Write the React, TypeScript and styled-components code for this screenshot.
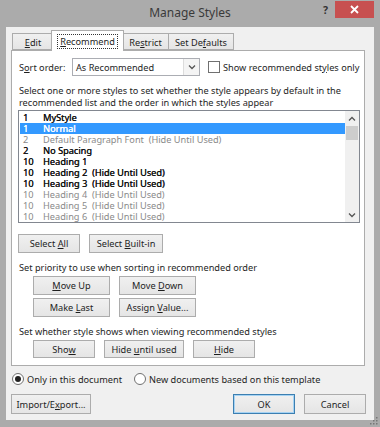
import React from 'react';
import styled, { createGlobalStyle } from 'styled-components';

const GlobalStyle = createGlobalStyle`
  html, body {
    margin: 0;
    padding: 0;
  }
  body {
    width: 380px;
    height: 427px;
    overflow: hidden;
    font-family: "Noto Sans", "Liberation Sans", sans-serif;
    font-size: 9.2px;
    color: #1e1e1e;
  }
`;

const Window = styled.div`
  position: relative;
  width: 380px;
  height: 427px;
  box-sizing: border-box;
  background: #ababab;
  display: flex;
  flex-direction: column;
  padding: 0 6px 7px 6px;
`;

const TitleBar = styled.div`
  height: 27px;
  display: grid;
  grid-template-columns: 1fr auto 1fr;
  align-items: start;
`;

const Title = styled.div`
  grid-column: 2;
  font-size: 12px;
  line-height: 25px;
  color: #3a3a3a;
`;

const Controls = styled.div`
  grid-column: 3;
  justify-self: end;
  display: flex;
  align-items: flex-start;
`;

const Help = styled.div`
  width: 12px;
  font-size: 10.5px;
  font-weight: 700;
  line-height: 20px;
  color: #333;
`;

const Close = styled.div`
  width: 39px;
  height: 17px;
  margin-top: 1px;
  background: #c75050;
  display: flex;
  align-items: center;
  justify-content: center;
`;

const Client = styled.div`
  flex: 1;
  background: #f0f0f0;
  display: flex;
  flex-direction: column;
  padding: 3px 9px 0 5px;
`;

const TabStrip = styled.div`
  display: flex;
  align-items: flex-end;
  height: 20px;
  padding-left: 1px;
  position: relative;
  z-index: 1;
`;

const Tab = styled.div<{ $w: number; $active?: boolean }>`
  width: ${(p) => p.$w}px;
  height: ${(p) => (p.$active ? 21 : 17)}px;
  box-sizing: border-box;
  margin-bottom: ${(p) => (p.$active ? -1 : 0)}px;
  margin-left: ${(p) => (p.$active ? -2 : 0)}px;
  margin-right: ${(p) => (p.$active ? -2 : -1)}px;
  border: 1px solid #acacac;
  border-bottom: ${(p) => (p.$active ? 'none' : '1px solid #acacac')};
  background: ${(p) => (p.$active ? '#fff' : 'linear-gradient(#f0f0f0, #e5e5e5)')};
  display: flex;
  align-items: center;
  justify-content: center;
  padding-top: ${(p) => (p.$active ? 0 : 1)}px;
  white-space: nowrap;
  position: relative;
  z-index: ${(p) => (p.$active ? 2 : 1)};
`;

const Focus = styled.span`
  outline: 1px dotted #333;
  padding: 0 2px;
  line-height: 13px;
`;

const Key = styled.span`
  text-decoration: underline;
  text-underline-offset: 1px;
`;

const Panel = styled.div`
  height: 316px;
  box-sizing: border-box;
  background: #fff;
  border: 1px solid #acacac;
  padding: 7px 4px 0 6px;
  display: flex;
  flex-direction: column;
`;

const SortRow = styled.div`
  display: flex;
  align-items: center;
  height: 18px;
  white-space: nowrap;
`;

const FieldLabel = styled.div`
  width: 54px;
  padding-left: 1px;
  box-sizing: border-box;
`;

const Combo = styled.div`
  width: 128px;
  height: 18px;
  box-sizing: border-box;
  border: 1px solid #abadb3;
  background: #fff;
  display: flex;
  align-items: center;
`;

const ComboText = styled.div`
  flex: 1;
  padding-left: 3px;
`;

const DropButton = styled.div`
  width: 15px;
  height: 16px;
  border-left: 1px solid #dcdcdc;
  background: #f4f4f4;
  display: flex;
  align-items: center;
  justify-content: center;
`;

const CheckBox = styled.div`
  width: 12px;
  height: 12px;
  box-sizing: border-box;
  margin-left: 8px;
  margin-right: 3px;
  border: 1px solid #707070;
  background: #fff;
`;

const Text = styled.div<{ $top: number }>`
  margin-top: ${(p) => p.$top}px;
  line-height: 12px;
  white-space: nowrap;
  padding-left: 1px;
`;

const ListBox = styled.div`
  margin-top: 1px;
  width: 342px;
  height: 113px;
  box-sizing: border-box;
  border: 1px solid #828790;
  display: flex;
  overflow: hidden;
`;

const Rows = styled.div`
  flex: 1;
  padding: 1px 0 0 1px;
  overflow: hidden;
`;

const Row = styled.div<{ $selected?: boolean; $dim?: boolean }>`
  height: 11px;
  line-height: 11px;
  display: flex;
  white-space: pre;
  padding-left: 3px;
  background: ${(p) => (p.$selected ? '#3399ff' : 'transparent')};
  color: ${(p) => (p.$selected ? '#fff' : p.$dim ? '#8a8a8a' : '#111')};
  text-shadow: ${(p) => (p.$dim ? 'none' : '0.3px 0 0 currentColor')};
`;

const Num = styled.span`
  width: 20px;
  flex-shrink: 0;
`;

const Scrollbar = styled.div`
  width: 14px;
  background: #f0f0f0;
  display: flex;
  flex-direction: column;
  align-items: center;
`;

const Arrow = styled.div`
  height: 14px;
  display: flex;
  align-items: center;
  justify-content: center;
`;

const Thumb = styled.div`
  width: 12px;
  height: 14px;
  margin-top: 1px;
  background: #cdcdcd;
`;

const Track = styled.div`
  flex: 1;
`;

const ButtonRow = styled.div<{ $top: number; $indent?: number }>`
  display: flex;
  gap: 9px;
  margin-top: ${(p) => p.$top}px;
  margin-left: ${(p) => p.$indent ?? 0}px;
`;

const Button = styled.div<{ $w: number; $h?: number; $default?: boolean }>`
  width: ${(p) => p.$w}px;
  height: ${(p) => p.$h ?? 19}px;
  box-sizing: border-box;
  border: 1px solid ${(p) => (p.$default ? '#3c7fb1' : '#acacac')};
  box-shadow: ${(p) => (p.$default ? 'inset 0 0 0 1px #a6d3f3' : 'none')};
  background: linear-gradient(#f0f0f0, #e5e5e5);
  display: flex;
  align-items: center;
  justify-content: center;
  white-space: nowrap;
  color: #1e1e1e;
`;

const RadioRow = styled.div`
  display: flex;
  align-items: center;
  height: 12px;
  margin-top: 7px;
  padding-left: 1px;
  white-space: nowrap;
`;

const RadioItem = styled.label`
  display: flex;
  align-items: center;
  gap: 3px;
  margin-right: 12px;
`;

const Radio = styled.div<{ $checked?: boolean }>`
  width: 12px;
  height: 12px;
  box-sizing: border-box;
  border-radius: 50%;
  border: 1px solid #707070;
  background: #fff;
  display: flex;
  align-items: center;
  justify-content: center;

  &::after {
    content: '';
    display: ${(p) => (p.$checked ? 'block' : 'none')};
    width: 6px;
    height: 6px;
    border-radius: 50%;
    background: #222;
  }
`;

const Footer = styled.div`
  display: flex;
  margin-top: 9px;
`;

const Spacer = styled.div`
  flex: 1;
`;

const FooterRight = styled.div`
  display: flex;
  gap: 9px;
  margin-right: -1px;
`;

const Grip = styled.svg`
  position: absolute;
  right: 2px;
  bottom: 2px;
`;

const Chevron = ({ up }: { up?: boolean }) => (
  <svg width="8" height="5" viewBox="0 0 8 5">
    <path
      d={up ? 'M1 4.5 L4 1.5 L7 4.5' : 'M1 0.5 L4 3.5 L7 0.5'}
      fill="none"
      stroke="#555"
      strokeWidth="1.3"
    />
  </svg>
);

type Style = { n: string; name: string; dim?: boolean; selected?: boolean };

const styles: Style[] = [
  { n: '1', name: 'MyStyle' },
  { n: '1', name: 'Normal', selected: true },
  { n: '2', name: 'Default Paragraph Font  (Hide Until Used)', dim: true },
  { n: '2', name: 'No Spacing' },
  { n: '10', name: 'Heading 1' },
  { n: '10', name: 'Heading 2  (Hide Until Used)' },
  { n: '10', name: 'Heading 3  (Hide Until Used)' },
  { n: '10', name: 'Heading 4  (Hide Until Used)', dim: true },
  { n: '10', name: 'Heading 5  (Hide Until Used)', dim: true },
  { n: '10', name: 'Heading 6  (Hide Until Used)', dim: true },
];

export default function App() {
  return (
    <>
      <GlobalStyle />
      <Window>
        <TitleBar>
          <Title>Manage Styles</Title>
          <Controls>
            <Help>?</Help>
            <Close>
              <svg width="9" height="9" viewBox="0 0 9 9">
                <path d="M1 1 L8 8 M8 1 L1 8" stroke="#fff" strokeWidth="1.8" />
              </svg>
            </Close>
          </Controls>
        </TitleBar>

        <Client>
          <TabStrip>
            <Tab $w={42}>
              <span><Key>E</Key>dit</span>
            </Tab>
            <Tab $w={73} $active>
              <Focus><Key>R</Key>ecommend</Focus>
            </Tab>
            <Tab $w={47}>
              <span>Re<Key>s</Key>trict</span>
            </Tab>
            <Tab $w={66}>
              <span>Set De<Key>f</Key>aults</span>
            </Tab>
          </TabStrip>

          <Panel>
            <SortRow>
              <FieldLabel>S<Key>o</Key>rt order:</FieldLabel>
              <Combo>
                <ComboText>As Recommended</ComboText>
                <DropButton>
                  <Chevron />
                </DropButton>
              </Combo>
              <CheckBox />
              <span>Show recommended st<Key>y</Key>les only</span>
            </SortRow>

            <Text $top={9}>
              Select one or more styles to set whether the style appears by default in the
              <br />
              recommended list and the order in which the styles appear
            </Text>

            <ListBox>
              <Rows>
                {styles.map((s, i) => (
                  <Row key={i} $selected={s.selected} $dim={s.dim}>
                    <Num>{s.n}</Num>
                    <span>{s.name}</span>
                  </Row>
                ))}
              </Rows>
              <Scrollbar>
                <Arrow>
                  <Chevron up />
                </Arrow>
                <Thumb />
                <Track />
                <Arrow>
                  <Chevron />
                </Arrow>
              </Scrollbar>
            </ListBox>

            <ButtonRow $top={11}>
              <Button $w={62}><span>Select <Key>A</Key>ll</span></Button>
              <Button $w={74}><span>Select <Key>B</Key>uilt-in</span></Button>
            </ButtonRow>

            <Text $top={9}>Set priority to use when sorting in recommended order</Text>
            <ButtonRow $top={2} $indent={15}>
              <Button $w={77}><span><Key>M</Key>ove Up</span></Button>
              <Button $w={77}><span>Move <Key>D</Key>own</span></Button>
            </ButtonRow>
            <ButtonRow $top={3} $indent={15}>
              <Button $w={77}><span>Make <Key>L</Key>ast</span></Button>
              <Button $w={77}><span>Assign <Key>V</Key>alue...</span></Button>
            </ButtonRow>

            <Text $top={9}>Set whether style shows when viewing recommended styles</Text>
            <ButtonRow $top={2} $indent={15}>
              <Button $w={62} $h={18}><span>Sho<Key>w</Key></span></Button>
              <Button $w={80} $h={18}><span>Hide <Key>u</Key>ntil used</span></Button>
              <Button $w={62} $h={18}><span><Key>H</Key>ide</span></Button>
            </ButtonRow>
          </Panel>

          <RadioRow>
            <RadioItem>
              <Radio $checked />
              <span>Only in this document</span>
            </RadioItem>
            <RadioItem>
              <Radio />
              <span>New documents based on this template</span>
            </RadioItem>
          </RadioRow>

          <Footer>
            <Button $w={80} $h={20}><span>Import/E<Key>x</Key>port...</span></Button>
            <Spacer />
            <FooterRight>
              <Button $w={62} $h={20} $default>OK</Button>
              <Button $w={62} $h={20}>Cancel</Button>
            </FooterRight>
          </Footer>
        </Client>

        <Grip width="9" height="9" viewBox="0 0 9 9">
          {[
            [7, 1], [7, 4], [4, 4], [7, 7], [4, 7], [1, 7],
          ].map(([x, y], i) => (
            <rect key={i} x={x} y={y} width="1.5" height="1.5" fill="#777" />
          ))}
        </Grip>
      </Window>
    </>
  );
}
